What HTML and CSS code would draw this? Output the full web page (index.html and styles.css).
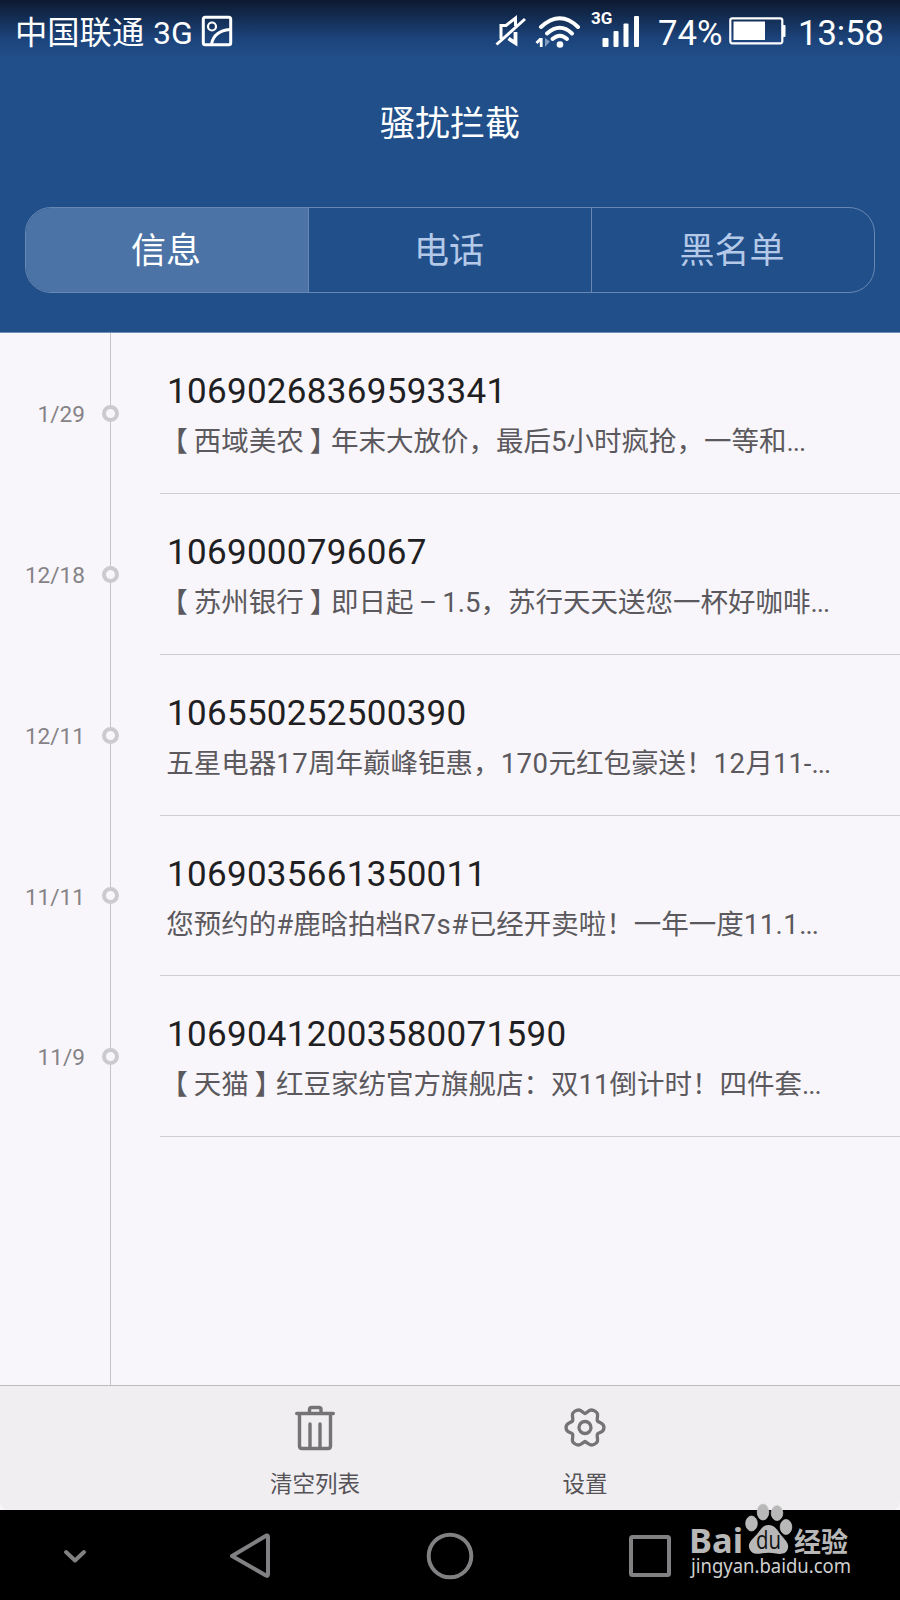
FILE: index.html
```html
<!DOCTYPE html>
<html lang="zh-CN">
<head>
<meta charset="utf-8">
<title>骚扰拦截</title>
<link rel="stylesheet" href="styles.css">
</head>
<body>
<div class="phone">
  <header class="header">
    <div class="status">
      <span class="carrier">中国联通</span><span class="net">3G</span>
      <svg class="pic" width="32" height="32" viewBox="0 0 32 32" fill="none" stroke="#fff" stroke-width="3"><rect x="2.300" y="2.300" width="27.400" height="27.400" rx="2"/><circle cx="11" cy="11.500" r="4" stroke-width="2.200"/><path d="M10.500 29C12 21 18 15.500 29 14.500"/></svg>
      <span class="space"></span>
      <svg class="mute" width="32" height="34" viewBox="0 0 32 34" fill="none" stroke="#fff" stroke-width="3"><path d="M1.500 30.500L30 5M6 25V11.500H11L20.500 4V12"/><path d="M13.500 24.500L20.500 29V18" stroke-width="3.800"/></svg>
      <svg class="wifi" width="46" height="34" viewBox="0 0 46 34" fill="none" stroke="#fff" stroke-width="4" stroke-linecap="round"><path d="M6 12Q25 -5.500 43 12"/><path d="M12 18.500Q25 7 37 18.500"/><path d="M17.500 24Q25 17.500 32 24"/><circle cx="25" cy="29.500" r="3.300" fill="#fff" stroke="none"/><path d="M6.200 23V32M1.500 28L5.500 24" stroke-width="2.800" stroke-linecap="butt"/><path d="M10 23V32L15 26.500Z" fill="#7f9ac0" stroke="none"/></svg>
      <svg class="signal" width="50" height="40" viewBox="0 0 50 40" fill="#fff"><text class="tiny" x="0" y="16">3G</text><rect x="11.500" y="30" width="6" height="9" rx="1"/><rect x="22.500" y="23" width="5" height="16" rx="1"/><rect x="32.500" y="15.500" width="5" height="23.500" rx="1"/><rect x="43" y="8" width="5" height="31" rx="1"/></svg>
      <span class="percent">74%</span>
      <svg class="battery" width="57" height="30" viewBox="0 0 57 30"><rect x="1.300" y="2.300" width="52" height="25" rx="2" fill="none" stroke="#fff" stroke-width="2.200"/><rect x="4.500" y="5.500" width="31.500" height="18.500" fill="#fff"/><rect x="53" y="9" width="3.500" height="12" rx="1" fill="#fff"/></svg>
      <span class="clock">13:58</span>
    </div>
    <h1 class="title">骚扰拦截</h1>
    <nav class="tabs">
      <span class="tab active">信息</span>
      <span class="tab">电话</span>
      <span class="tab">黑名单</span>
    </nav>
  </header>
  <main class="list">
    <article class="row"><time class="date">1/29</time><div class="rail"><i class="dot"></i></div><div class="message"><div class="number">10690268369593341</div><div class="snippet"><span class="open">【</span>西域美农<span class="close">】</span>年末大放价，最后5小时疯抢，一等和<span class="more">...</span></div></div></article>
    <article class="row"><time class="date">12/18</time><div class="rail"><i class="dot"></i></div><div class="message"><div class="number">1069000796067</div><div class="snippet"><span class="open">【</span>苏州银行<span class="close">】</span>即日起 – 1.5，苏行天天送您一杯好咖啡<span class="more">...</span></div></div></article>
    <article class="row"><time class="date">12/11</time><div class="rail"><i class="dot"></i></div><div class="message"><div class="number">106550252500390</div><div class="snippet">五星电器<span class="latin">17</span>周年巅峰钜惠，<span class="latin">170</span>元红包豪送！<span class="latin">12</span>月11-<span class="more">...</span></div></div></article>
    <article class="row"><time class="date">11/11</time><div class="rail"><i class="dot"></i></div><div class="message"><div class="number">1069035661350011</div><div class="snippet">您预约的#鹿晗拍档<span class="latin">R7s#</span>已经开卖啦！一年一度<span class="latin">11.1</span><span class="more">...</span></div></div></article>
    <article class="row"><time class="date">11/9</time><div class="rail"><i class="dot"></i></div><div class="message"><div class="number">10690412003580071590</div><div class="snippet"><span class="open">【</span>天猫<span class="close">】</span>红豆家纺官方旗舰店：双11倒计时！四件套<span class="more">...</span></div></div></article>
    <div class="rest"><div class="rail"></div></div>
  </main>
  <footer class="toolbar">
    <div class="action"><svg width="44" height="48" viewBox="0 0 44 48" fill="none" stroke="#757376" stroke-width="3.400" stroke-linecap="round" stroke-linejoin="round"><path d="M3.700 9.500H40.300M6.500 10V42Q6.500 44.500 9 44.500H35Q37.500 44.500 37.500 42V10M16.500 9V5.500Q16.500 3.500 18.500 3.500H26Q28 3.500 28 5.500V9M17 20V43M27 20V43"/></svg><span>清空列表</span></div>
    <div class="action"><svg width="44" height="48" viewBox="0 0 44 48" fill="none" stroke="#757376" stroke-width="3.300" stroke-linejoin="round"><circle cx="22" cy="23.500" r="6"/><path d="M22 9.500C25 8 25.500 6 28.500 6C31 6 34 8 34.500 10C35 13 33.500 15 34.500 17C36.500 19 41 18.500 41 23.500C41 28.500 36.500 28 34.500 30C33.500 32 35 34 34.500 37C34 39 31 41 28.500 41C25.500 41 25 39 22 37.500C19 39 18.500 41 15.500 41C13 41 10 39 9.500 37C9 34 10.500 32 9.500 30C7.500 28 3 28.500 3 23.500C3 18.500 7.500 19 9.500 17C10.500 15 9 13 9.500 10C10 8 13 6 15.500 6C18.500 6 19 8 22 9.500Z"/></svg><span>设置</span></div>
  </footer>
  <div class="navbar">
    <svg width="700" height="90" viewBox="0 0 700 90" fill="none" stroke="#818082" stroke-width="4" stroke-linejoin="round" stroke-linecap="round"><path d="M66 42L75 50.500L84 42"/><path d="M232 46L266.500 25.500Q268 25 268 27V64Q268 66.500 266 65.500Z"/><circle cx="450" cy="46" r="21.300"/><rect x="631" y="27" width="38" height="38" rx="1.500"/></svg>
    <svg class="mark" width="180" height="90" viewBox="0 0 180 90"><g fill="#b8b8b8"><text class="bai" x="9" y="58" textLength="54" lengthAdjust="spacingAndGlyphs">Bai</text><g stroke="#ccc" stroke-width=".7"><ellipse cx="71.500" cy="28.500" rx="5.800" ry="7.500"/><ellipse cx="83" cy="17" rx="5.800" ry="8"/><ellipse cx="97" cy="18" rx="5.800" ry="7.500"/><ellipse cx="106" cy="32" rx="5.800" ry="7.500"/></g><path d="M88.500 30C95 30 98 36 101 40C105 45 109 48 108 53C107 59 101 59.500 96 58.500C91 57.500 86 57.500 81 58.500C75 59.500 70 58 69 52C68 47 74 43 78 38C81 34 83 30 88.500 30Z"/><text class="exp" x="114" y="56.500" textLength="54" lengthAdjust="spacingAndGlyphs">经验</text></g><text class="du" x="76" y="54" textLength="25" lengthAdjust="spacingAndGlyphs">du</text><text class="url" x="11" y="78" textLength="160" lengthAdjust="spacingAndGlyphs">jingyan.baidu.com</text></svg>
  </div>
</div>
</body>
</html>
```
FILE: styles.css
```css
* { box-sizing: border-box; }
body { margin: 0; font-family: Roboto, "Noto Sans CJK SC", sans-serif; }
.phone { width: 900px; height: 1600px; display: flex; flex-direction: column; background: #f8f6fa; overflow: hidden; }
.header { height: 333px; background: linear-gradient(#0d1a30 0, #132d53 18px, #1c437a 38px, #214f8a 58px); color: #fff; flex: none; border-bottom: 1px solid #6f8fb5; }
.status { height: 66px; display: flex; align-items: center; padding: 0 15px; white-space: nowrap; line-height: 1; }
.carrier { font-size: 32.300px; width: 138px; padding-top: 1px; }
.net { font-size: 32px; width: 48px; }
.pic { margin-top: -4px; }
.space { flex: 1; }
.mute { margin: -4px 8px 0 0; }
.wifi { margin: -3px 10px 0 0; }
.signal { margin: -10px 17px 0 0; }
.tiny { font: 700 17px Roboto, sans-serif; }
.percent { font-size: 34.800px; width: 71px; }
.battery { margin-right: 12px; margin-top: -4px; }
.clock { font-size: 34.500px; width: 87px; }
.title { margin: 33px 0 0; height: 52px; line-height: 52px; text-align: center; font-size: 35px; font-weight: 400; }
.tabs { margin: 56px 25px 0; height: 86px; display: flex; border: 1px solid #6888b3; border-radius: 26px; overflow: hidden; }
.tab { flex: 1; padding-right: 2px; line-height: 88px; text-align: center; font-size: 35px; color: #b4c9e8; }
.tab + .tab { border-left: 1px solid #6888b3; }
.tab.active { background: #4b73a6; color: #fff; }
.list { flex: 1; display: flex; flex-direction: column; }
.row { height: 160.850px; flex: none; display: flex; }
.date { width: 97px; padding: 68px 12px 0 0; text-align: right; font-size: 22.600px; line-height: 27px; color: #858387; }
.rail { width: 27px; display: flex; align-items: center; justify-content: center; background: linear-gradient(#c5c4c8, #c5c4c8) 13px 0 / 1px 100% no-repeat; }
.dot { width: 17px; height: 17px; border: 4px solid #cbcacd; border-radius: 50%; background: #f8f6fa; }
.message { margin-left: 36px; padding: 37px 0 0 7px; flex: 1; border-bottom: 1px solid #cfcdd1; white-space: nowrap; }
.number { font-size: 35px; letter-spacing: .3px; line-height: 44px; color: #202022; }
.snippet { font-size: 27.500px; line-height: 40px; margin: 8px 0 0 -.8px; word-spacing: -1.500px; color: #5b595d; }
.open { font-feature-settings: "halt"; padding: 0 6px 0 7.700px; }
.close { font-feature-settings: "halt"; padding: 0 7.700px 0 6px; }
.latin { letter-spacing: .5px; }
.more { letter-spacing: -1px; }
.rest { flex: 1; display: flex; padding-left: 97px; }
.toolbar { height: 125px; flex: none; display: flex; justify-content: center; background: #f0eef1; border-top: 1px solid #bdbbbf; border-radius: 0 0 8px 8px; }
.action { width: 270px; display: flex; flex-direction: column; align-items: center; padding-top: 18px; font-size: 22.500px; line-height: 30px; color: #555357; }
.action span { margin-top: 17px; }
.navbar { height: 90px; flex: none; background: #000; position: relative; }
.mark { position: absolute; left: 680px; top: -15px; overflow: visible; }
.bai { font: 700 34px "Noto Sans", sans-serif; }
.du { font: 500 25px "Open Sans", sans-serif; fill: #111; }
.exp { font: 700 27px "Noto Sans CJK SC", sans-serif; }
.url { font: 20px "Noto Sans", sans-serif; fill: #d0d0d0; }
```
